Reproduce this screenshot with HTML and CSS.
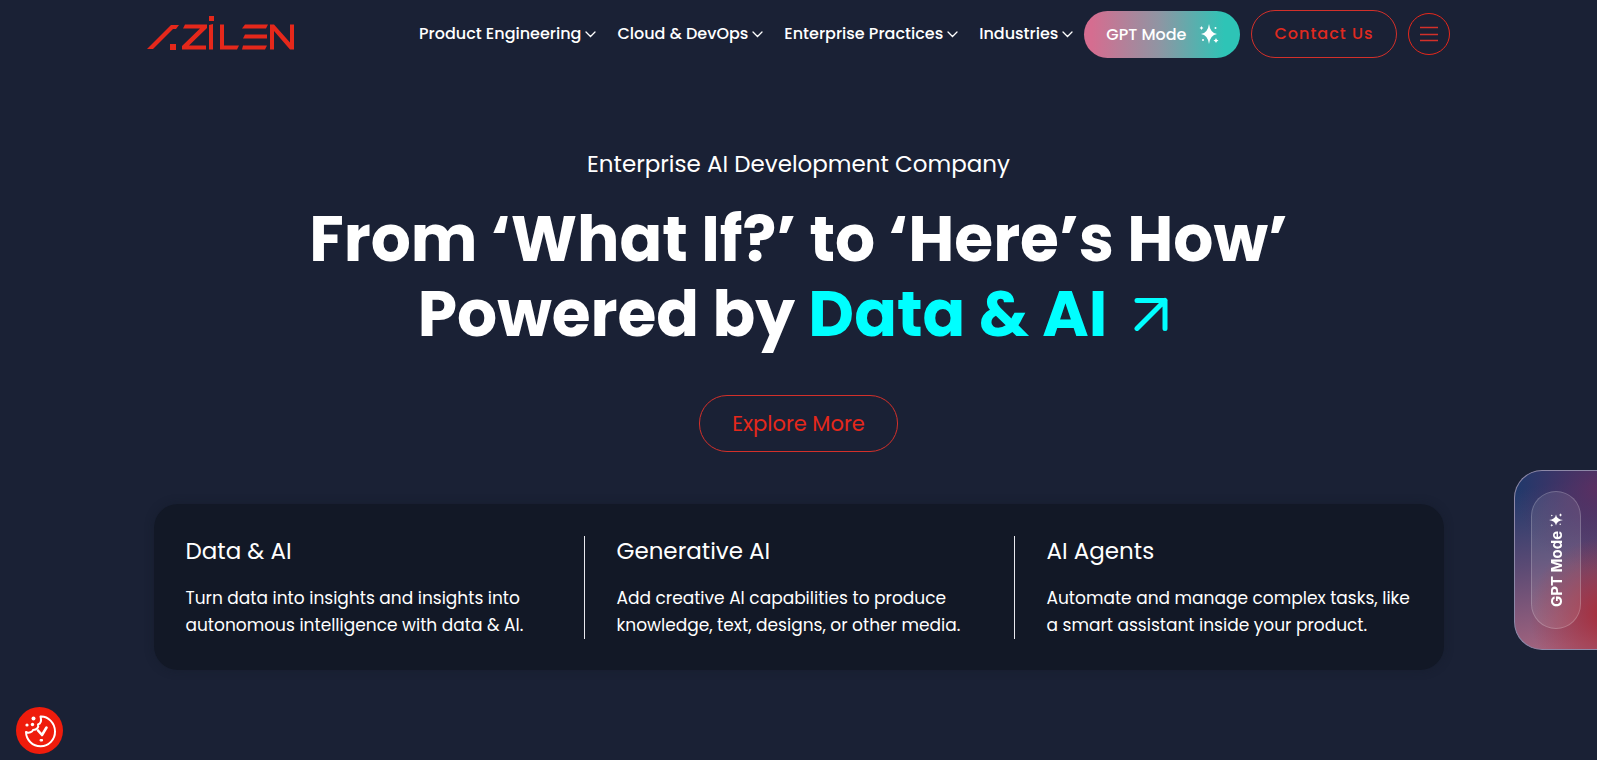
FILE: index.html
```html
<!DOCTYPE html>
<html lang="en">
<head>
<meta charset="utf-8">
<meta name="viewport" content="width=device-width, initial-scale=1">
<title>Azilen</title>
<link rel="stylesheet" href="styles.css">
</head>
<body>
<svg class="defs" width="0" height="0" aria-hidden="true">
  <symbol id="chevron" viewBox="0 0 11 7"><path d="M1 1l4.500 4.500L10 1" fill="none" stroke="currentColor" stroke-width="1.300" stroke-linecap="round"/></symbol>
  <symbol id="sparkle" viewBox="0 0 20 20"><path d="M10 0q1.200 9 8 10-6.800 1-8 10-1.200-9-8-10 6.800-1 8-10zM17 14q.5 2 2.500 2.500-2 .5-2.500 2.500-.5-2-2.500-2.500 2-.5 2.500-2.500zM2.500 2q.3 1.700 2 2-1.700.3-2 2-.3-1.700-2-2 1.700-.3 2-2z" fill="currentColor"/><circle cx="16.500" cy="4" r="1" fill="currentColor"/><circle cx="4" cy="16" r="1" fill="currentColor"/></symbol>
</svg>
<div class="page">
  <header class="header">
    <a class="logo" href="#" aria-label="Azilen">
      <svg width="148" height="36" viewBox="0 0 148 36" fill="#e5281b">
        <path d="M-1 33L23 9H31L28 13H25L5 33z"/>
        <path d="M22 28h6v6h-6z"/>
        <path d="M37 8.500H59V12L41 29.500H58V33.500H34V30L52 12.500H35z"/>
        <path d="M61 9L65 8V33.500H61zM61 0h5v5h-5z"/>
        <path d="M72 8.500h4V29.500H91L89 33.500H72z"/>
        <path d="M97 8.500H120L118 12.500H94zM97 18.500H119V22.500H95zM95 29.500H119L117 33.500H94z"/>
        <path d="M122 33.500V8.500H126L142 26.500V8.500H146V33.500H142L126 15V33.500z"/>
      </svg>
    </a>
    <div class="header-end">
      <nav class="nav">
        <a href="#">Product Engineering<svg class="chevron"><use href="#chevron"/></svg></a>
        <a href="#">Cloud &amp; DevOps<svg class="chevron"><use href="#chevron"/></svg></a>
        <a href="#">Enterprise Practices<svg class="chevron"><use href="#chevron"/></svg></a>
        <a href="#">Industries<svg class="chevron"><use href="#chevron"/></svg></a>
      </nav>
      <div class="actions">
        <button class="gpt" type="button">GPT Mode<svg class="sparkle"><use href="#sparkle"/></svg></button>
        <a class="contact" href="#">Contact Us</a>
        <button class="menu" type="button" aria-label="Menu">
          <svg width="18" height="16" viewBox="0 0 18 16" stroke="currentColor" stroke-width="1.300"><path d="M0 1.500h18M0 8.500h18M0 14.500h18"/></svg>
        </button>
      </div>
    </div>
  </header>

  <main class="hero">
    <p class="eyebrow">Enterprise AI Development Company</p>
    <h1 class="title">From ‘What If?’ to ‘Here’s How’<br>Powered by <a class="accent" href="#">Data &amp; AI<svg class="arrow" viewBox="0 0 34 34"><path d="M3 3.500h28v28M31 3.500L3 31.500" fill="none" stroke="currentColor" stroke-width="5" stroke-linecap="round" stroke-linejoin="round"/></svg></a></h1>
    <a class="explore" href="#">Explore More</a>
    <section class="cards">
      <article class="card">
        <h2>Data &amp; AI</h2>
        <p>Turn data into insights and insights into<br>autonomous intelligence with data &amp; AI.</p>
      </article>
      <article class="card">
        <h2>Generative AI</h2>
        <p>Add creative AI capabilities to produce<br>knowledge, text, designs, or other media.</p>
      </article>
      <article class="card">
        <h2>AI Agents</h2>
        <p>Automate and manage complex tasks, like<br>a smart assistant inside your product.</p>
      </article>
    </section>
  </main>

  <button class="side-tab" type="button"><span class="side-pill">GPT Mode<svg class="side-sparkle"><use href="#sparkle"/></svg></span></button>
  <button class="cookie" type="button" aria-label="Cookie settings">
    <svg width="34" height="34" viewBox="0 0 34 34" fill="none" stroke="#fff" stroke-width="2" stroke-linecap="round" stroke-linejoin="round">
      <path d="M17.500 2.500C25 2 32 9 32 17.500A14.500 14.500 0 0 1 3 18C6 19.500 9.500 18 10 16C14 16 16 13 15 10.500C18 9.500 18.500 6 17.500 2.500z"/>
      <path d="M15 16.500l4 4.500 4.500-7.500" stroke-width="2.600"/>
      <path d="M17.500 25.500h2v1.500h-2z" fill="#fff" stroke-width="1"/>
      <g fill="#fff" stroke="none"><circle cx="10.500" cy="4.500" r="2"/><circle cx="4" cy="11" r="1.600"/><circle cx="9.500" cy="10.500" r="1.700"/></g>
    </svg>
  </button>
</div>
</body>
</html>
```
FILE: styles.css
```css
* { box-sizing: border-box; }
body { margin: 0; background: #fff; font-family: Poppins, Inter, "Open Sans", sans-serif; color: #fff; }
a { color: inherit; text-decoration: none; }
button { font: inherit; color: inherit; cursor: pointer; padding: 0; }
h1, h2, p { margin: 0; font-weight: 400; }
.defs { position: absolute; }

.page { position: relative; min-height: 100vh; margin-right: 3px; background: #1a2135; }

.header { display: flex; align-items: center; justify-content: space-between; max-width: 1302px; margin: 0 auto; padding-top: 10px; }
.logo svg { display: block; overflow: visible; }
.header-end, .nav, .actions { display: flex; align-items: center; }
.header-end { gap: 11px; }
.nav { gap: 21px; font-size: 16px; font-weight: 500; line-height: 22px; white-space: nowrap; }
.nav a { display: flex; align-items: center; gap: 4px; }
.chevron { width: 11px; height: 7px; }
.actions { gap: 11px; white-space: nowrap; }
.gpt { display: flex; align-items: center; gap: 13px; height: 47px; padding: 0 21px 0 22px; border: 0; border-radius: 24px; font-size: 16px; font-weight: 500; background: linear-gradient(90deg, #d56d90 5%, #8f95a3 48%, #2ec4b6 90%); }
.sparkle { width: 20px; height: 20px; }
.contact { height: 48px; padding: 0 22px; border: 1px solid #d3302a; border-radius: 24px; color: #df2a20; font-size: 16px; font-weight: 500; line-height: 46px; letter-spacing: 1px; }
.menu { display: grid; place-items: center; width: 42px; height: 42px; border: 1px solid #e5281b; border-radius: 50%; background: none; color: #d3302a; }

.hero { display: flex; flex-direction: column; align-items: center; padding: 88px 24px 0; text-align: center; }
.eyebrow { font-size: 23px; line-height: 36px; }
.title { margin-top: 20px; font-size: 63px; font-weight: 700; line-height: 75px; }
.accent { color: #0ff; }
.arrow { width: 34px; height: 34px; margin: 0 11px 0 27px; vertical-align: 5px; }
.explore { margin-top: 43px; padding: 0 32px; border: 1px solid #d3302a; border-radius: 28px; color: #e5281b; font-size: 21px; line-height: 55px; }
.cards { display: grid; grid-template-columns: repeat(3, 1fr); width: 100%; max-width: 1290px; margin-top: 52px; padding: 32px 0 31px; border-radius: 24px; background: #121826; box-shadow: 0 0 10px #12182666; text-align: left; }
.card { padding: 0 0 0 32px; white-space: nowrap; }
.card + .card { border-left: 1px solid #e8e8ee; }
.card h2 { font-size: 23px; line-height: 30px; }
.card p { margin-top: 19px; font-size: 17px; line-height: 27px; }

.side-tab { position: fixed; right: 3px; top: 470px; width: 83px; height: 180px; padding-right: 16px; display: flex; align-items: center; justify-content: flex-end; border: 1px solid #8d88a8; border-right: 0; border-radius: 28px 0 0 28px; background: radial-gradient(circle at 110% 80%, #a82c3a 0, #a82c3a00 45%), radial-gradient(circle at 100% 10%, #5a2f62 0, #5a2f6200 45%), linear-gradient(170deg, #20396b 10%, #5a4a74 50%, #a2637e 95%); }
.side-pill { display: flex; align-items: center; justify-content: center; gap: 3px; width: 50px; height: 138px; border: 1px solid #ffffff33; border-radius: 25px; background: #ffffff18; font-family: Inter, sans-serif; font-size: 15px; font-weight: 700; white-space: nowrap; writing-mode: vertical-rl; transform: rotate(180deg); }
.side-sparkle { width: 14px; height: 14px; transform: rotate(90deg); }
.cookie { position: fixed; left: 16px; bottom: 6px; display: grid; place-items: center; width: 47px; height: 47px; border: 0; border-radius: 50%; background: #ef1c0c; }
```
